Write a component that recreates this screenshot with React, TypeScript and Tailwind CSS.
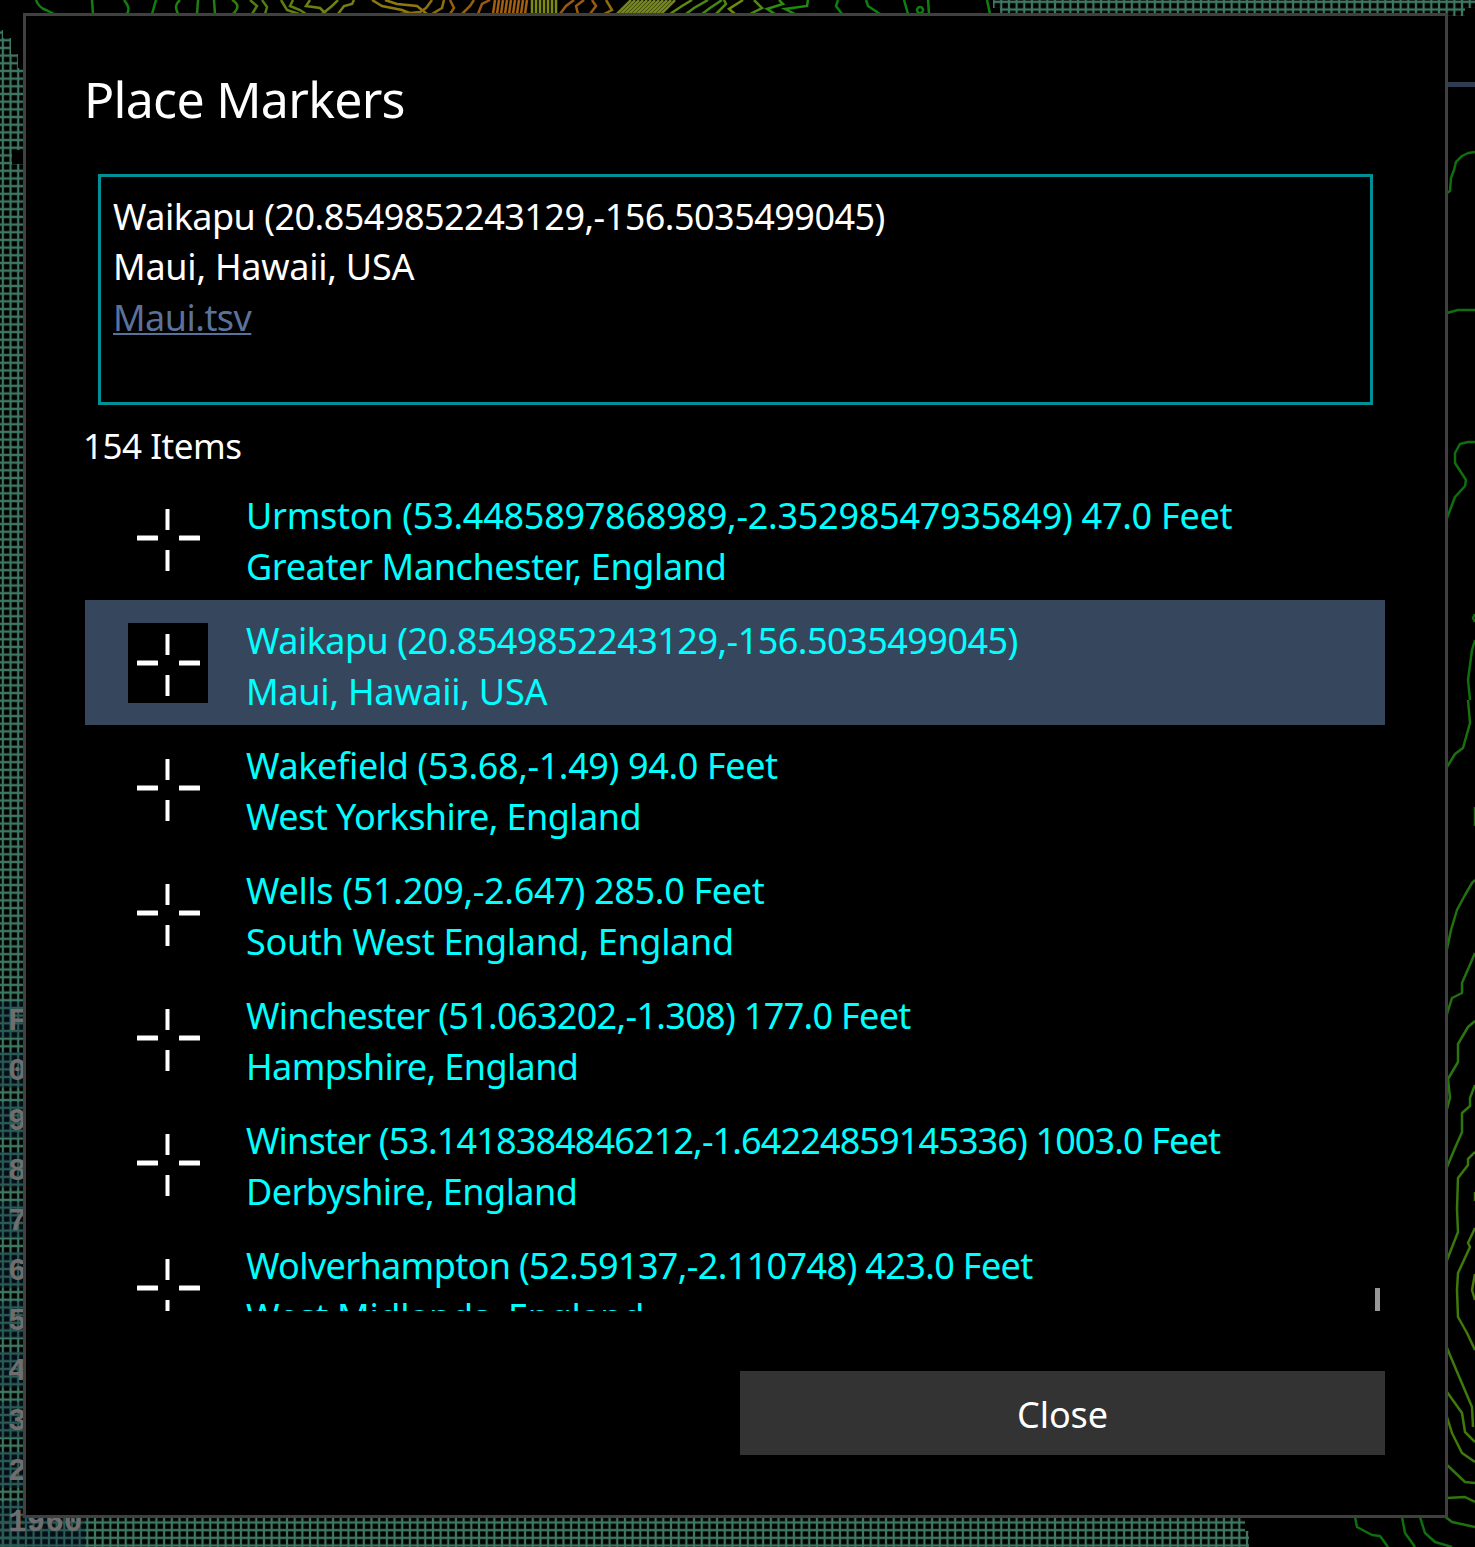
import React from "react";

const FONT = "font-['Noto_Sans','Open_Sans',sans-serif]";

const places = [
  { line1: "Urmston (53.4485897868989,-2.35298547935849) 47.0 Feet", t1: "tracking-[-0.27px]", line2: "Greater Manchester, England", t2: "tracking-[-0.36px]" },
  { line1: "Waikapu (20.8549852243129,-156.5035499045)", t1: "tracking-[-0.53px]", line2: "Maui, Hawaii, USA", t2: "tracking-[-0.25px]", selected: true },
  { line1: "Wakefield (53.68,-1.49) 94.0 Feet", t1: "tracking-[-0.37px]", line2: "West Yorkshire, England", t2: "tracking-[-0.55px]" },
  { line1: "Wells (51.209,-2.647) 285.0 Feet", t1: "tracking-[-0.32px]", line2: "South West England, England", t2: "tracking-[-0.33px]" },
  { line1: "Winchester (51.063202,-1.308) 177.0 Feet", t1: "tracking-[-0.68px]", line2: "Hampshire, England", t2: "tracking-[-0.6px]" },
  { line1: "Winster (53.1418384846212,-1.64224859145336) 1003.0 Feet", t1: "tracking-[-0.88px]", line2: "Derbyshire, England", t2: "tracking-[-0.55px]" },
  { line1: "Wolverhampton (52.59137,-2.110748) 423.0 Feet", t1: "tracking-[-0.64px]", line2: "West Midlands, England", t2: "tracking-[-0.32px]" },
];

// contour lines peeking out around the dialog
const topLines: [string, string][] = [
  ["M36 0c2 5 4 8 10 10l8 4", "#0f7f0f"],
  ["M92 0l1 14", "#0f7f0f"],
  ["M124 0c4 5 6 9 3 14", "#0f7f0f"],
  ["M156 0l-4 14", "#0f7f0f"],
  ["M180 0c-6 5-4 9-2 14", "#1f7f0f"],
  ["M198 0l-1 14", "#1f7f0f"],
  ["M214 0l1 14", "#1f7f0f"],
  ["M232 0c7 4 7 8 1 14", "#2f7f0f"],
  ["M250 0l7 6-5 8", "#4f7f10"],
  ["M262 0l5 7-2 7", "#4f7f10"],
  ["M281 0l6 10 12 4", "#5f8010"],
  ["M293 0l-3 6 10 4 6 4", "#5f8010"],
  ["M310 0l-4 6 14 2 6 6", "#6f8010"],
  ["M322 14l10-8 6-6", "#6f8010"],
  ["M338 14l6-8 8-2 2-4", "#7a8010"],
  ["M372 0l10 6 20 4 10 4", "#8a7a10"],
  ["M385 0l12 4 20 2 10 8", "#8f7a10"],
  ["M400 14l20-2 6-4 6-8", "#8f7010"],
  ["M432 14l10-6 2-8", "#8f7010"],
  ["M450 14l4-6-4-8", "#946010"],
  ["M462 14l8-8 4-6", "#946010"],
  ["M478 14l4-10 8-4", "#9a5a10"],
  ["M560 14l6-8 8-6", "#9a5a10"],
  ["M578 14l-2-8 8-6", "#9a5a10"],
  ["M590 14l6-8-4-6", "#9a5a10"],
  ["M604 14l8-4-6-10", "#946a10"],
  ["M670 14l12-8 10-6", "#5f8a10"],
  ["M686 14l8-6 14-8", "#4f8a10"],
  ["M702 14l8-6 12-8", "#3f8a10"],
  ["M716 14l10-10-2-4", "#4f8a10"],
  ["M735 14l-6-5 14-9", "#6f8a10"],
  ["M750 14l12-6-8-8", "#4f8a10"],
  ["M775 14l-8-5 16-5-4-4", "#2f8a10"],
  ["M795 14l-10-5 22-3 1-6", "#1f8a10"],
  ["M842 14l-6-8 2-6", "#0f7f0f"],
  ["M880 14l-12-8-2-6", "#0f7f0f"],
  ["M908 14l-4-14", "#0f7f0f"],
  ["M929 14l-1-14", "#0f7f0f"],
  ["M920 7a3 3 0 1 0 .1 0", "#0f7f0f"],
  ["M990 14l-3-14", "#0f7f0f"],
];

const hatch = [
  ...[493, 497, 501, 505, 509, 513, 517, 521, 525].map((x): [string, string] => [`M${x} 14L${x + 2} 0`, "#a06010"]),
  ...[532, 536, 540, 544, 548, 552, 556].map((x): [string, string] => [`M${x} 14L${x} 0`, "#7f8a10"]),
  ...[617, 621, 625, 629, 633, 637, 641, 645, 649, 653, 657, 661].map((x): [string, string] => [`M${x} 14L${x + 14} 0`, "#74861a"]),
];

const rightLines: [string, string][] = [
  ["M1447 193L1450 191L1451 178L1454 170L1456 162L1462 156L1468 153L1475 152", "#0d700d"],
  ["M1447 313L1458 310L1475 310", "#0d700d"],
  ["M1447 518L1455 497L1465 486L1466 480L1455 463L1455 453L1460 444L1468 442L1475 442", "#0d700d"],
  ["M1475 614L1473 618L1475 622M1475 640L1472 650L1470 665L1468 680L1470 700", "#0d700d"],
  ["M1468 700L1470 723L1463 748L1455 754L1447 767", "#1a700d"],
  ["M1475 807V826", "#1a700d"],
  ["M1475 880L1472 883L1465 895L1457 910L1451 930L1447 949", "#1f720d"],
  ["M1475 953L1462 983L1462 993L1452 998L1447 1014", "#1f720d"],
  ["M1475 1021L1468 1027L1458 1044L1458 1062L1448 1079L1450 1098L1447 1109", "#2a750d"],
  ["M1475 1085L1470 1098L1470 1106L1462 1113L1462 1132L1455 1148L1447 1167", "#2f760d"],
  ["M1475 1152L1468 1159L1468 1165L1458 1178L1457 1209L1458 1232L1447 1260", "#38780d"],
  ["M1475 1192V1201", "#38780d"],
  ["M1475 1228L1468 1243L1470 1247L1458 1273L1457 1290L1458 1317L1467 1333L1475 1350", "#3f7a0a"],
  ["M1475 1274L1472 1290L1475 1300", "#4a7a0a"],
  ["M1447 1348L1455 1367L1472 1407L1473 1427", "#3f7a0a"],
  ["M1447 1392L1462 1413L1465 1432L1475 1442", "#3f7a0a"],
  ["M1447 1417L1452 1433L1462 1453L1475 1462", "#3f7a0a"],
  ["M1447 1465L1465 1482L1475 1483", "#2f760d"],
  ["M1447 1498L1465 1497L1475 1502", "#2f760d"],
  ["M1443 1515L1452 1522L1475 1527", "#1f720d"],
  ["M1355 1517L1357 1527L1372 1535L1380 1536L1388 1547", "#0d700d"],
  ["M1402 1517L1405 1533L1415 1547", "#0d700d"],
  ["M1420 1517L1425 1533L1435 1542L1452 1547", "#0d700d"],
];

const labels = ["F", "0", "9", "8", "7", "6", "5", "4", "3", "2"];

function Backdrop() {
  return (
    <svg className="absolute inset-0" width="1475" height="1547" viewBox="0 0 1475 1547" fill="none">
      <defs>
        <pattern id="grid" width="7.68" height="7.68" patternUnits="userSpaceOnUse" patternTransform="translate(-1 -2)">
          <path d="M0 3.84H7.68M3.84 0V7.68" stroke="#3f7862" strokeWidth="2.2" />
        </pattern>
      </defs>
      <path d="M0 30h3v8h8v16h7v14h6v82h-12v14h12v1383H0Z" fill="url(#grid)" />
      <path d="M0 1517H1245V1531H1249V1547H0Z" fill="url(#grid)" />
      <path d="M993 0H1475V8H1465V16H1000V8H993Z" fill="url(#grid)" />
      {labels.map((n, i) => (
        <rect key={n} x="0" y={1002 + i * 50} width="24" height="36" fill="#0a2440" opacity="0.35" />
      ))}
      <rect x="0" y="1502" width="85" height="45" fill="#0a2440" opacity="0.35" />
      {topLines.concat(hatch).map(([d, c], i) => (
        <path key={i} d={d} stroke={c} strokeWidth="2.5" />
      ))}
      {rightLines.map(([d, c], i) => (
        <path key={i} d={d} stroke={c} strokeWidth="2.5" strokeLinejoin="round" />
      ))}
      <rect x="1447" y="82" width="28" height="5" fill="#2f3b4f" />
      <g fill="#6e6e6e" fontFamily="'Liberation Mono', monospace" fontWeight="700" fontSize="31">
        {labels.map((n, i) => (
          <text key={n} x="8" y={1030 + i * 50}>{n}</text>
        ))}
        <text x="8" y="1531">1960</text>
      </g>
    </svg>
  );
}

function Crosshair({ selected }: { selected?: boolean }) {
  return (
    <svg width="80" height="80" viewBox="0 0 80 80" className={selected ? "bg-black shrink-0" : "shrink-0"}>
      <g fill="#fff">
        <rect x="37.5" y="11" width="4" height="21" rx="0.5" />
        <rect x="37.5" y="52" width="4" height="21" rx="0.5" />
        <rect x="9" y="37.5" width="21" height="5" rx="0.5" />
        <rect x="51" y="37.5" width="21" height="5" rx="0.5" />
      </g>
    </svg>
  );
}

function PlaceRow({ line1, t1, line2, t2, selected }: { line1: string; t1: string; line2: string; t2: string; selected?: boolean }) {
  return (
    <div className={`h-[125px] shrink-0 flex items-center pl-[43px] ${selected ? "bg-[#36465d]" : ""}`}>
      <Crosshair selected={selected} />
      <div className="ml-[38px] mt-[7px] text-[36px] leading-[51px] text-[#00ffff] whitespace-nowrap">
        <div className={t1}>{line1}</div>
        <div className={t2}>{line2}</div>
      </div>
    </div>
  );
}

export default function App() {
  return (
    <div className={`relative w-[1475px] h-[1547px] bg-black overflow-hidden ${FONT}`}>
      <Backdrop />
      <div className="relative ml-[23px] mt-[13px] w-[1425px] h-[1505px] bg-black border-[3px] border-[#404040] text-white pt-[48px] float-left">
        <h2 className="ml-[58px] text-[50px] leading-[70px] tracking-[-0.7px] font-normal">Place Markers</h2>
        <div className="ml-[72px] mt-[40px] w-[1275px] h-[231px] border-[3px] border-[#008f94] px-[12px] pt-[15px] text-[36px] leading-[50px] tracking-[-0.53px]">
          <div>Waikapu (20.8549852243129,-156.5035499045)</div>
          <div className="tracking-[-0.25px]">Maui, Hawaii, USA</div>
          <div className="mt-[1px] text-[#5a7299] underline underline-offset-[2px] decoration-[2px]">Maui.tsv</div>
        </div>
        <div className="ml-[57px] mt-[16px] text-[35px] leading-[50px] tracking-[-0.5px]">154 Items</div>
        <div className="relative ml-[59px] mt-[4px] w-[1300px] h-[836px] overflow-hidden flex flex-col">
          {places.map((p) => (
            <PlaceRow key={p.line1} {...p} />
          ))}
          <div className="absolute right-[5px] bottom-0 w-[5px] h-[23px] bg-[#969696]" />
        </div>
        <div className="flex justify-end mr-[60px] mt-[60px]">
          <button className="w-[645px] h-[84px] bg-[#333333] pt-[4px] text-[36px] tracking-[-0.1px] text-white">Close</button>
        </div>
      </div>
    </div>
  );
}
